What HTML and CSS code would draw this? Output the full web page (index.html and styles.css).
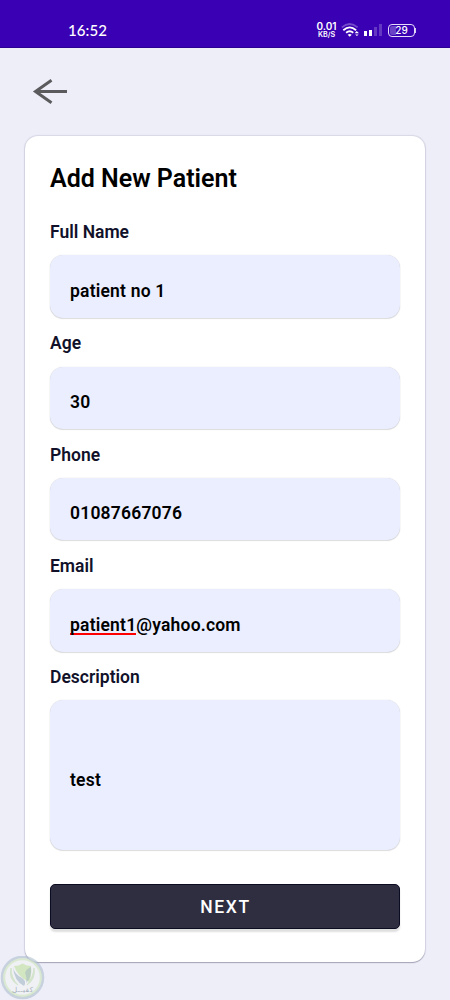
FILE: index.html
```html
<!DOCTYPE html>
<html lang="en">
<head>
<meta charset="utf-8">
<title>Add New Patient</title>
<link rel="stylesheet" href="styles.css">
</head>
<body>
<header class="status">
  <span class="clock">16:52</span>
  <div class="indicators">
    <div class="speed"><span class="rate">0.01</span><span class="unit">KB/S</span></div>
    <svg class="wifi" width="19" height="15" viewBox="0 0 19 15" fill="none" stroke="#fff">
      <path d="M.8 4.300Q8.700-2.300 16.600 4.300" stroke-width="1.700" opacity=".3"/>
      <path d="M2.300 7.200Q8.700 1.600 15.100 7.200M5.100 9.800Q8.700 6.800 12.300 9.800" stroke-width="1.800"/>
      <path d="M6.700 11.700Q8.700 10.300 10.700 11.700L8.700 13.800Z" fill="#fff" stroke="none"/>
      <path d="M13.700 10.300L15.700 8L18 10.300ZM14.200 11.400H17.600L15.900 13Z" fill="#fff" stroke="none"/>
    </svg>
    <svg class="signal" width="18" height="13" viewBox="0 0 18 13" fill="#fff">
      <rect x="0" y="7" width="3" height="5"/>
      <rect x="5" y="6" width="3" height="6"/>
      <rect x="10" y="3" width="3" height="9" opacity=".22"/>
      <rect x="15" y="0" width="3" height="12" opacity=".22"/>
    </svg>
    <div class="battery"><span class="level">29</span></div>
  </div>
</header>
<nav class="toolbar">
  <svg width="36" height="28" viewBox="0 0 36 28" fill="none" stroke="#5b5b5e" stroke-width="3">
    <path d="M3.500 13.500H35M19.500 2.300L3.500 13.500L19.500 24.700"/>
  </svg>
</nav>
<main class="card">
  <h1 class="title">Add New Patient</h1>
  <div class="label">Full Name</div>
  <div class="field">patient no 1</div>
  <div class="label">Age</div>
  <div class="field">30</div>
  <div class="label">Phone</div>
  <div class="field">01087667076</div>
  <div class="label">Email</div>
  <div class="field"><span><span class="misspelt">patient1</span>@yahoo.com</span></div>
  <div class="label">Description</div>
  <div class="field tall">test</div>
  <button class="next">NEXT</button>
</main>
<svg class="badge" width="46" height="46" viewBox="0 0 46 46">
  <circle cx="22.500" cy="21.500" r="20.500" fill="#f1f3f1" fill-opacity=".6" stroke="#9fb4c6" stroke-width="2.500" stroke-opacity=".5"/>
  <circle cx="22.500" cy="21.500" r="18.300" fill="none" stroke="#c3e2ad" stroke-width="2" stroke-opacity=".5"/>
  <path d="M14 10Q19 10 22.500 7.500Q27 10 31 10Q32 20 29 26Q18 21 14 10Z" fill="#b9dc98" opacity=".55"/>
  <path d="M13 11Q14 18 22 22Q27 25 24 30Q14 25 13 11Z" fill="#93a9bf" opacity=".5"/>
  <path d="M31 11Q26 13 25 17Q27 21 26 27Q32 22 31 11Z" fill="#93a9bf" opacity=".4"/>
  <path d="M11 12Q8 23 18 29Q11 22 11 12ZM34 12Q36 23 27 29Q33 22 34 12Z" fill="#9fcc82" stroke="#9fcc82" opacity=".35"/>
  <text class="badge-text" x="22.500" y="36" text-anchor="middle" textLength="21">كفيــل</text>
</svg>
</body>
</html>
```
FILE: styles.css
```css
* { box-sizing: border-box; }
body {
  margin: 0;
  height: 1000px;
  position: relative;
  overflow: hidden;
  background: #eeeef9;
  font-family: Roboto, "Liberation Sans", sans-serif;
  color: #000;
}
.status {
  height: 48px;
  padding: 13px 35px 0 68px;
  display: flex;
  justify-content: space-between;
  background: #3a00b3;
  border-bottom: 1px solid #2c0093;
  color: #fff;
}
.clock {
  font: 500 15px/35px Lato, sans-serif;
  letter-spacing: .1px;
}
.indicators { display: flex; align-items: flex-start; }
.speed {
  width: 21px;
  padding-top: 9px;
  display: flex;
  flex-direction: column;
  align-items: center;
  font-family: Inter, sans-serif;
  font-weight: 600;
}
.rate { font-size: 10px; line-height: 9px; }
.unit { font-size: 7.200px; line-height: 8px; }
.wifi { margin: 10px 0 0 4px; }
.signal { margin: 11px 0 0 4px; }
.battery {
  width: 27px;
  height: 13px;
  margin: 11px 0 0 6px;
  padding: 1px;
  border: 1px solid #e6dcfa;
  border-radius: 4px;
  background: linear-gradient(90deg, #6940c6 28%, transparent 28%) content-box;
  position: relative;
  text-align: center;
}
.battery::after {
  content: "";
  position: absolute;
  right: -2px;
  top: 3px;
  width: 1px;
  height: 5px;
  background: #d9ccf2;
}
.level {
  display: block;
  font: 500 10px/9px Inter, sans-serif;
}
.toolbar { height: 88px; padding: 30px 0 0 32px; }
.toolbar svg { display: block; }
.card {
  width: 400px;
  height: 826px;
  margin: 0 auto;
  padding: 25px 25px 0;
  background: #fff;
  border-radius: 13px;
  box-shadow: 0 0 1px 1px rgba(60, 60, 100, .13), 0 1px 1px rgba(50, 50, 80, .32);
}
.title { margin: 0 0 23px; font-size: 25px; line-height: 36px; font-weight: 600; }
.label {
  height: 35.250px;
  font-size: 17.500px;
  line-height: 24px;
  font-weight: 600;
  color: #11112a;
}
.field {
  height: 62.500px;
  margin-bottom: 13.500px;
  padding: 8.500px 20px 0;
  display: flex;
  align-items: center;
  background: #eaeeff;
  border-radius: 13px;
  box-shadow: 0 0 1px rgba(70, 60, 60, .25), 0 1px 1px rgba(60, 60, 60, .16);
  font-size: 17.500px;
  font-weight: 600;
  letter-spacing: .2px;
}
.field.tall { height: 150px; margin-bottom: 33.500px; padding-top: 9.500px; }
.misspelt { box-shadow: 0 -2px 0 #f00 inset; }
.next {
  display: block;
  width: 350px;
  height: 45px;
  padding: 3px 0 0 1px;
  border: 1px solid #0b0b22;
  border-radius: 5px;
  background: #2f2e41;
  box-shadow: 0 3px 2px rgba(0, 0, 0, .13);
  color: #fff;
  font: 500 17.500px/1 Roboto, sans-serif;
  letter-spacing: 1.600px;
}
.badge { position: absolute; left: 0; top: 956px; }
.badge-text { font: 7px "DejaVu Sans", sans-serif; fill: #8795a5; opacity: .7; }
```
